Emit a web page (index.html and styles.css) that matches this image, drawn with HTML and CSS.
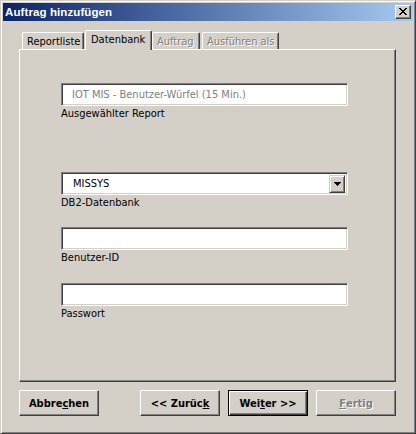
FILE: index.html
```html
<!DOCTYPE html>
<html lang="de">
<head>
<meta charset="utf-8">
<title>Auftrag hinzufügen</title>
<link rel="stylesheet" href="styles.css">
</head>
<body>
<div class="window">
  <div class="titlebar">
    <span class="title">Auftrag hinzufügen</span>
    <span class="close">
      <svg width="8" height="7" viewBox="0 0 8 7"><path d="M0 0h2v1h-2zM6 0h2v1h-2zM1 1h2v1h-2zM5 1h2v1h-2zM2 2h4v1h-4zM3 3h2v1h-2zM2 4h4v1h-4zM1 5h2v1h-2zM5 5h2v1h-2zM0 6h2v1h-2zM6 6h2v1h-2z" fill="#000"/></svg>
    </span>
  </div>
  <div class="body">
    <div class="tabs">
      <div class="tab tab-report">Reportliste</div>
      <div class="tab tab-active">Datenbank</div>
      <div class="tab tab-disabled tab-auftrag">Auftrag</div>
      <div class="tab tab-disabled tab-ausf">Ausführen als</div>
    </div>
    <div class="panel">
      <div class="field field-report">
        <div class="edit edit-disabled">IOT MIS - Benutzer-Würfel (15 Min.)</div>
        <div class="label">Ausgewählter Report</div>
      </div>
      <div class="field field-db">
        <div class="edit combo">
          <span class="combo-text">MISSYS</span>
          <span class="combo-btn">
            <svg width="7" height="4" viewBox="0 0 7 4"><path d="M0 0h7v1h-7zM1 1h5v1h-5zM2 2h3v1h-3zM3 3h1v1h-1z" fill="#000"/></svg>
          </span>
        </div>
        <div class="label">DB2-Datenbank</div>
      </div>
      <div class="field field-user">
        <div class="edit"></div>
        <div class="label">Benutzer-ID</div>
      </div>
      <div class="field field-pass">
        <div class="edit"></div>
        <div class="label">Passwort</div>
      </div>
    </div>
    <div class="buttons">
      <div class="btn">Abbre<u>c</u>hen</div>
      <div class="btn-group">
        <div class="btn">&lt;&lt; Zurüc<u>k</u></div>
        <div class="btn btn-default">Wei<u>t</u>er &gt;&gt;</div>
        <div class="btn btn-disabled"><u>F</u>ertig</div>
      </div>
    </div>
  </div>
</div>
</body>
</html>
```
FILE: styles.css
```css
* { box-sizing: border-box; }
html, body { margin: 0; padding: 0; background: #d4d0c8; }
body {
  width: 416px; height: 434px; overflow: hidden;
  font-family: "DejaVu Sans Condensed", "DejaVu Sans", sans-serif;
  font-stretch: condensed;
  font-size: 11px; color: #000;
}

.window {
  width: 416px; height: 434px;
  background: #d4d0c8;
  border-top: 1px solid #d4d0c8; border-left: 1px solid #d4d0c8;
  border-right: 1px solid #404040; border-bottom: 1px solid #404040;
  box-shadow: inset 1px 1px 0 #ffffff, inset -1px -1px 0 #808080;
  padding: 2px;
  display: flex; flex-direction: column;
}

.titlebar {
  height: 18px;
  background: linear-gradient(to right, #0a246a, #a6caf0);
  display: flex; align-items: center; justify-content: space-between;
  padding: 0 2px 0 2px;
}
.title { color: #fff; font-family: "Liberation Sans", sans-serif; font-stretch: normal; font-weight: bold; font-size: 11.5px; letter-spacing: 0.1px; }
.close {
  width: 16px; height: 14px;
  background: #d4d0c8;
  border-top: 1px solid #fff; border-left: 1px solid #fff;
  border-right: 1px solid #404040; border-bottom: 1px solid #404040;
  box-shadow: inset -1px -1px 0 #808080;
  display: flex; align-items: center; justify-content: center;
  padding: 0 1px 1px 0;
}
.close svg { display: block; }

.body { flex: 1; display: flex; flex-direction: column; padding: 9px 17px 0 16px; }

.tabs { display: flex; align-items: flex-end; padding-left: 3px; height: 19px; }
.tab {
  height: 17px;
  border-top: 1px solid #fff; border-left: 1px solid #fff;
  border-right: 1px solid #404040;
  box-shadow: inset -1px 0 0 #808080;
  border-radius: 2px 2px 0 0;
  padding: 2px 0 0 4px;
  white-space: nowrap;
  line-height: 13px;
}
.tab-report { width: 62px; }
.tab-active {
  width: 67px; height: 20px; margin-left: 1px; margin-bottom: -1px;
  padding: 2px 0 0 5px;
  position: relative; z-index: 1;
  background: #d4d0c8;
}
.tab-auftrag { width: 48px; }
.tab-ausf { width: 77px; margin-left: 2px; }
.tab-disabled { color: #808080; text-shadow: 1px 1px 0 #fff; }

.panel {
  height: 333px;
  border-top: 1px solid #fff; border-left: 1px solid #fff;
  border-right: 1px solid #404040; border-bottom: 1px solid #404040;
  box-shadow: inset -1px -1px 0 #808080;
  padding: 33px 0 0 41px;
  display: flex; flex-direction: column;
}
.field { width: 287px; }
.field-db { margin-top: 52px; }
.field-user { margin-top: 18px; }
.field-pass { margin-top: 19px; }

.edit {
  height: 23px;
  background: #fff;
  border-top: 1px solid #808080; border-left: 1px solid #808080;
  border-right: 1px solid #fff; border-bottom: 1px solid #fff;
  box-shadow: inset 1px 1px 0 #404040, inset -1px -1px 0 #d4d0c8;
  padding: 0 0 0 10px;
  line-height: 21px;
  white-space: nowrap;
}
.edit-disabled { background: #fff; color: #808080; }
.combo { display: flex; align-items: center; justify-content: space-between; padding-right: 2px; padding-left: 11px; }
.combo-btn {
  width: 16px; height: 18px;
  background: #d4d0c8;
  border-top: 1px solid #d4d0c8; border-left: 1px solid #d4d0c8;
  border-right: 1px solid #404040; border-bottom: 1px solid #404040;
  box-shadow: inset 1px 1px 0 #fff, inset -1px -1px 0 #808080;
  display: flex; align-items: center; justify-content: center;
  padding-top: 1px;
}
.combo-btn svg { display: block; }
.label { height: 14px; line-height: 13px; padding-top: 1px; }

.buttons { display: flex; justify-content: space-between; margin-top: 8px; }
.btn-group { display: flex; gap: 8px; }
.btn {
  width: 80px; height: 26px;
  border-top: 1px solid #fff; border-left: 1px solid #fff;
  border-right: 1px solid #404040; border-bottom: 1px solid #404040;
  box-shadow: inset -1px -1px 0 #808080;
  font-weight: bold;
  display: flex; align-items: center; justify-content: center;
  white-space: nowrap;
}
.btn-default {
  border: 1px solid #000;
  box-shadow: inset 1px 1px 0 #fff, inset -1px -1px 0 #404040, inset -2px -2px 0 #808080;
}
.btn-disabled { color: #808080; text-shadow: 1px 1px 0 #fff; }
```
